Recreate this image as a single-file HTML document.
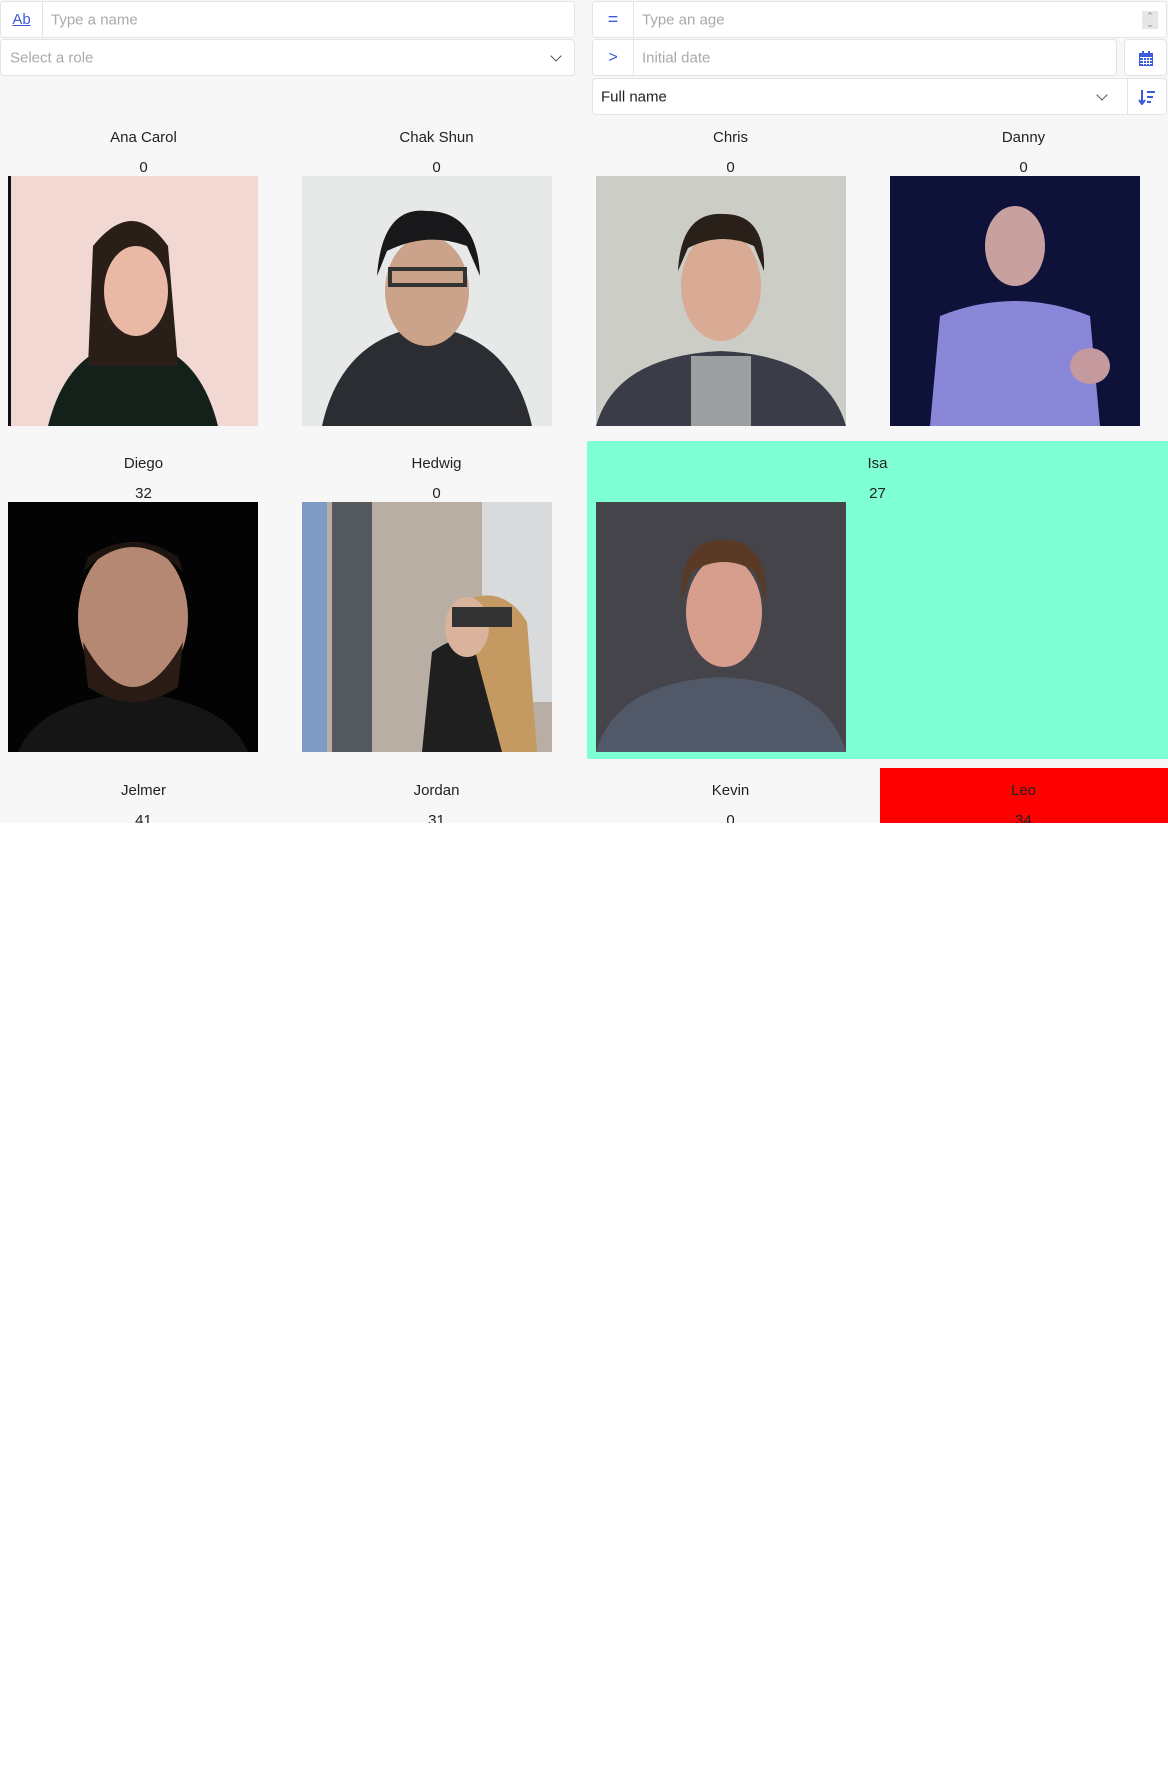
<!DOCTYPE html>
<html><head><meta charset="utf-8"><style>
*{box-sizing:border-box;margin:0;padding:0}
body{width:1168px;height:1792px;background:#fff;font-family:"Liberation Sans",sans-serif;position:relative;overflow:hidden}
#bg{position:absolute;left:0;top:0;width:1168px;height:823px;background:#f7f7f7}
.f{position:absolute;background:#fff;border:1px solid #e4e4e4;border-radius:4px;font-size:15px;color:#aaa}
.f span{position:absolute;top:50%;transform:translateY(-50%)}
.pre{position:absolute;top:0;bottom:0;border-right:1px solid #e4e4e4;color:#3b5bdb;display:flex;align-items:center;justify-content:center}
.chev{position:absolute;top:50%;width:8px;height:8px;border-right:1px solid #555;border-bottom:1px solid #555;transform:translateY(-75%) rotate(45deg)}
.t{position:absolute;font-size:15px;color:#222;text-align:center;width:293px}
.img{position:absolute;width:250px;height:250px;overflow:hidden}
</style></head><body>
<div id="bg"></div>
<div class="f" style="left:0;top:1px;width:575px;height:37px">
 <div class="pre" style="left:0;width:42px;text-decoration:underline;font-size:15px">Ab</div>
 <span style="left:50px">Type a name</span></div>
<div class="f" style="left:0;top:39px;width:575px;height:37px"><span style="left:9px">Select a role</span><div class="chev" style="right:14px"></div></div>
<div class="f" style="left:592px;top:1px;width:575px;height:37px">
 <div class="pre" style="left:0;width:41px;font-size:18px">=</div>
 <span style="left:49px">Type an age</span>
 <div style="position:absolute;right:8px;top:9px;width:16px;height:18px;background:#e6e6e6;color:#888;font-size:9px;line-height:8px;text-align:center;padding-top:1px">&#8963;<br>&#8964;</div></div>
<div class="f" style="left:592px;top:39px;width:525px;height:37px">
 <div class="pre" style="left:0;width:41px;font-size:16px">&gt;</div>
 <span style="left:49px">Initial date</span></div>
<div class="f" style="left:1124px;top:39px;width:43px;height:37px">
 <svg style="position:absolute;left:14px;top:11px" width="14" height="15" viewBox="0 0 14 15"><rect x="0" y="2" width="14" height="13" fill="#3b5bdb"/><rect x="3" y="0" width="2" height="4" fill="#3b5bdb"/><rect x="9" y="0" width="2" height="4" fill="#3b5bdb"/><g fill="#fff"><rect x="1" y="6" width="12" height="1"/><rect x="1" y="9" width="12" height="1"/><rect x="1" y="12" width="12" height="1"/><rect x="4" y="6" width="1" height="8"/><rect x="7" y="6" width="1" height="8"/><rect x="10" y="6" width="1" height="8"/></g></svg></div>
<div class="f" style="left:592px;top:78px;width:575px;height:37px;color:#222">
 <span style="left:8px">Full name</span><div class="chev" style="right:60px"></div>
 <div style="position:absolute;right:38px;top:0;bottom:0;border-left:1px solid #e4e4e4"></div>
 <svg style="position:absolute;right:10px;top:11px" width="18" height="15" viewBox="0 0 18 15"><path d="M4 0v13M1 10l3 4 3-4" stroke="#3b5bdb" stroke-width="2" fill="none"/><rect x="9" y="1" width="8" height="2" fill="#3b5bdb"/><rect x="9" y="6" width="6" height="2" fill="#3b5bdb"/><rect x="9" y="11" width="4" height="2" fill="#3b5bdb"/></svg></div>

<div style="position:absolute;left:587px;top:441px;width:581px;height:318px;background:#7fffd4"></div>
<div style="position:absolute;left:880px;top:768px;width:288px;height:55px;background:#f00"></div>

<div class="t" style="left:-3px;top:129px">Ana Carol</div><div class="t" style="left:-3px;top:159px">0</div>
<div class="t" style="left:290px;top:129px">Chak Shun</div><div class="t" style="left:290px;top:159px">0</div>
<div class="t" style="left:584px;top:129px">Chris</div><div class="t" style="left:584px;top:159px">0</div>
<div class="t" style="left:877px;top:129px">Danny</div><div class="t" style="left:877px;top:159px">0</div>
<svg class="img" style="left:8px;top:176px" viewBox="0 0 250 250"><rect width="250" height="250" fill="#f2d8d2"/><rect x="0" y="0" width="3" height="250" fill="#111"/><path d="M40 250 Q60 170 125 165 Q190 170 210 250Z" fill="#14201a"/><path d="M85 70 Q125 20 160 70 L170 190 L80 190Z" fill="#2a1e18"/><ellipse cx="128" cy="115" rx="32" ry="45" fill="#e9b9a6"/></svg>
<svg class="img" style="left:302px;top:176px" viewBox="0 0 250 250"><rect width="250" height="250" fill="#e7e8e8"/><path d="M20 250 Q40 160 125 150 Q210 160 230 250Z" fill="#2b2d33"/><ellipse cx="125" cy="115" rx="42" ry="55" fill="#caa38a"/><path d="M75 100 Q80 30 125 35 Q175 35 178 100 L165 70 Q125 55 85 75Z" fill="#18181a"/><rect x="88" y="93" width="75" height="16" fill="none" stroke="#333" stroke-width="4"/></svg>
<svg class="img" style="left:596px;top:176px" viewBox="0 0 250 250"><rect width="250" height="250" fill="#cdcdc8"/><path d="M0 250 Q20 180 125 175 Q230 180 250 250Z" fill="#3a3d48"/><rect x="95" y="180" width="60" height="70" fill="#9c9fa2"/><ellipse cx="125" cy="110" rx="40" ry="55" fill="#d9ab94"/><path d="M82 95 Q85 35 128 38 Q170 38 168 95 L158 70 Q125 55 92 72Z" fill="#2a201a"/></svg>
<svg class="img" style="left:890px;top:176px" viewBox="0 0 250 250"><rect width="250" height="250" fill="#0e1238"/><path d="M40 250 L50 140 Q125 110 200 140 L210 250Z" fill="#8a86d8"/><ellipse cx="125" cy="70" rx="30" ry="40" fill="#c9a0a0"/><ellipse cx="200" cy="190" rx="20" ry="18" fill="#c49a9f"/></svg>

<div class="t" style="left:-3px;top:455px">Diego</div><div class="t" style="left:-3px;top:485px">32</div>
<div class="t" style="left:290px;top:455px">Hedwig</div><div class="t" style="left:290px;top:485px">0</div>
<div class="t" style="left:731px;top:455px">Isa</div><div class="t" style="left:731px;top:485px">27</div>
<svg class="img" style="left:8px;top:502px" viewBox="0 0 250 250"><rect width="250" height="250" fill="#030303"/><path d="M10 250 Q30 200 125 190 Q220 200 240 250Z" fill="#151515"/><ellipse cx="125" cy="115" rx="55" ry="75" fill="#b48872"/><path d="M75 140 Q125 230 175 140 L170 185 Q125 215 80 185Z" fill="#2a1c14"/><path d="M75 70 Q125 20 175 70 L170 55 Q125 25 80 55Z" fill="#1f1510"/></svg>
<svg class="img" style="left:302px;top:502px" viewBox="0 0 250 250"><rect width="250" height="250" fill="#b9aea4"/><rect x="0" y="0" width="25" height="250" fill="#7d9bc4"/><rect x="30" y="0" width="40" height="250" fill="#555a5e"/><rect x="180" y="0" width="70" height="200" fill="#d8dadc"/><path d="M120 250 L130 150 Q170 120 220 150 L230 250Z" fill="#1f1f1f"/><path d="M160 100 Q200 80 225 120 L235 250 L200 250Z" fill="#c49a62"/><ellipse cx="165" cy="125" rx="22" ry="30" fill="#d9b39c"/><rect x="150" y="105" width="60" height="20" fill="#333"/></svg>
<svg class="img" style="left:596px;top:502px" viewBox="0 0 250 250"><rect width="250" height="250" fill="#45444a"/><path d="M0 250 Q20 180 125 175 Q230 180 250 250Z" fill="#515868"/><ellipse cx="128" cy="110" rx="38" ry="55" fill="#d79e8e"/><path d="M85 100 Q85 35 128 38 Q172 38 170 100 L160 70 Q128 50 95 70Z" fill="#5a3a24"/></svg>

<div class="t" style="left:-3px;top:782px">Jelmer</div><div class="t" style="left:-3px;top:812px">41</div>
<div class="t" style="left:290px;top:782px">Jordan</div><div class="t" style="left:290px;top:812px">31</div>
<div class="t" style="left:584px;top:782px">Kevin</div><div class="t" style="left:584px;top:812px">0</div>
<div class="t" style="left:877px;top:782px">Leo</div><div class="t" style="left:877px;top:812px">34</div>
<div style="position:absolute;left:0;top:823px;width:1168px;height:969px;background:#fff"></div>
</body></html>
